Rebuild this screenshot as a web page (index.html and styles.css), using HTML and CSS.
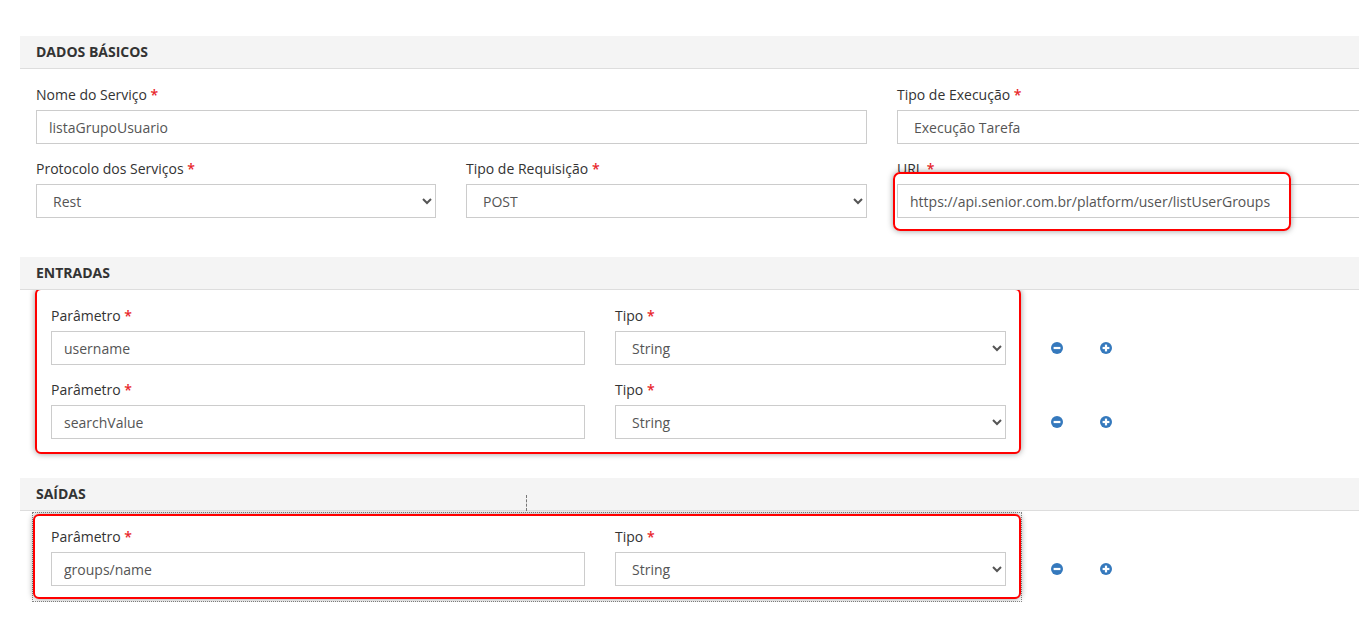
FILE: index.html
```html
<!DOCTYPE html>
<html lang="pt-BR">
<head>
<meta charset="utf-8">
<title>Serviço</title>
<link rel="stylesheet" href="styles.css">
</head>
<body>
<div class="page">
  <section class="section">
    <h2 class="section-head">DADOS BÁSICOS</h2>
    <div class="basic-grid">
      <div class="field span2">
        <label class="lbl">Nome do Serviço <span class="req">*</span></label>
        <input class="ctl" type="text" value="listaGrupoUsuario">
      </div>
      <div class="field wide">
        <label class="lbl">Tipo de Execução <span class="req">*</span></label>
        <select class="ctl sel"><option>Execução Tarefa</option></select>
      </div>
      <div class="field">
        <label class="lbl">Protocolo dos Serviços <span class="req">*</span></label>
        <select class="ctl sel"><option>Rest</option></select>
      </div>
      <div class="field">
        <label class="lbl">Tipo de Requisição <span class="req">*</span></label>
        <select class="ctl sel"><option>POST</option></select>
      </div>
      <div class="field wide url-field">
        <label class="lbl">URL <span class="req">*</span></label>
        <input class="ctl" type="text" value="https://api.senior.com.br/platform/user/listUserGroups">
        <span class="url-mark"></span>
      </div>
    </div>
  </section>

  <section class="section">
    <h2 class="section-head">ENTRADAS</h2>
    <div class="params-wrap entradas">
      <div class="params">
        <div class="param-row">
          <div class="field">
            <label class="lbl">Parâmetro <span class="req">*</span></label>
            <input class="ctl" type="text" value="username">
          </div>
          <div class="field">
            <label class="lbl">Tipo <span class="req">*</span></label>
            <select class="ctl sel"><option>String</option></select>
          </div>
        </div>
        <div class="param-row">
          <div class="field">
            <label class="lbl">Parâmetro <span class="req">*</span></label>
            <input class="ctl" type="text" value="searchValue">
          </div>
          <div class="field">
            <label class="lbl">Tipo <span class="req">*</span></label>
            <select class="ctl sel"><option>String</option></select>
          </div>
        </div>
      </div>
      <div class="icon-col">
        <div class="icon-row">
          <svg class="ico" viewBox="0 0 12 12"><circle cx="6" cy="6" r="6"/><rect x="2.6" y="4.9" width="6.8" height="2.2" fill="#fff"/></svg>
          <svg class="ico" viewBox="0 0 12 12"><circle cx="6" cy="6" r="6"/><rect x="2.6" y="4.9" width="6.8" height="2.2" fill="#fff"/><rect x="4.9" y="2.6" width="2.2" height="6.8" fill="#fff"/></svg>
        </div>
        <div class="icon-row">
          <svg class="ico" viewBox="0 0 12 12"><circle cx="6" cy="6" r="6"/><rect x="2.6" y="4.9" width="6.8" height="2.2" fill="#fff"/></svg>
          <svg class="ico" viewBox="0 0 12 12"><circle cx="6" cy="6" r="6"/><rect x="2.6" y="4.9" width="6.8" height="2.2" fill="#fff"/><rect x="4.9" y="2.6" width="2.2" height="6.8" fill="#fff"/></svg>
        </div>
      </div>
    </div>
  </section>

  <section class="section">
    <h2 class="section-head saidas-head">SAÍDAS<span class="drag-line"></span></h2>
    <div class="params-wrap saidas">
      <div class="dotted">
        <div class="params params-out">
          <div class="param-row">
            <div class="field">
              <label class="lbl">Parâmetro <span class="req">*</span></label>
              <input class="ctl" type="text" value="groups/name">
            </div>
            <div class="field">
              <label class="lbl">Tipo <span class="req">*</span></label>
              <select class="ctl sel"><option>String</option></select>
            </div>
          </div>
        </div>
      </div>
      <div class="icon-col icon-col-out">
        <div class="icon-row">
          <svg class="ico" viewBox="0 0 12 12"><circle cx="6" cy="6" r="6"/><rect x="2.6" y="4.9" width="6.8" height="2.2" fill="#fff"/></svg>
          <svg class="ico" viewBox="0 0 12 12"><circle cx="6" cy="6" r="6"/><rect x="2.6" y="4.9" width="6.8" height="2.2" fill="#fff"/><rect x="4.9" y="2.6" width="2.2" height="6.8" fill="#fff"/></svg>
        </div>
      </div>
    </div>
  </section>
</div>
</body>
</html>
```
FILE: styles.css
```css
html, body {
  margin: 0;
  padding: 0;
  overflow: hidden;
  background: #fff;
}
body {
  font-family: "Open Sans", "Noto Sans", sans-serif;
  font-size: 14px;
  color: #333;
}
.page {
  padding: 36px 0 0 20px;
  overflow: hidden;
}
.section-head {
  margin: 0;
  height: 32px;
  line-height: 32px;
  background: #f4f4f4;
  border-bottom: 1px solid #ddd;
  padding-left: 16px;
  font-size: 14px;
  font-weight: 700;
  color: #333;
  position: relative;
}
.basic-grid {
  display: grid;
  grid-template-columns: 400px 401px 1fr;
  column-gap: 30px;
  row-gap: 15px;
  padding: 16px 0 0 16px;
  margin-bottom: 39px;
}
.span2 { grid-column: span 2; }
.field {
  display: flex;
  flex-direction: column;
  position: relative;
  min-width: 0;
}
.wide .ctl {
  width: calc(100% + 140px);
}
.lbl {
  line-height: 20px;
  margin-bottom: 5px;
  color: #333;
}
.req { color: #e8262b; font-weight: 600; }
.ctl {
  box-sizing: border-box;
  height: 34px;
  border: 1px solid #ccc;
  border-radius: 0;
  padding: 0 12px;
  font-family: "Open Sans", "Noto Sans", sans-serif;
  font-size: 14px;
  color: #555;
  background: #fff;
  outline: none;
  width: 100%;
}
.sel { padding-left: 12px; }
.url-mark {
  position: absolute;
  left: -4px;
  top: 13px;
  width: 398px;
  height: 59px;
  box-sizing: border-box;
  border: 2px solid #f00;
  border-radius: 7px;
  box-shadow: 0 0 6px rgba(0,0,0,0.4);
  pointer-events: none;
}
.params-wrap {
  display: flex;
  align-items: flex-start;
}
.entradas {
  margin: -2px 0 0 15px;
}
.params {
  box-sizing: border-box;
  width: 986px;
  border: 2px solid #f00;
  border-radius: 6px;
  box-shadow: 0 0 6px rgba(0,0,0,0.4);
  padding: 16px 12px 13px 14px;
  display: flex;
  flex-direction: column;
  gap: 15px;
  background: #fff;
}
.param-row {
  display: grid;
  grid-template-columns: 534px 391px;
  column-gap: 30px;
}
.icon-col {
  padding-top: 43px;
  margin-left: 30px;
  display: flex;
  flex-direction: column;
  gap: 40px;
}
.icon-row {
  height: 34px;
  display: flex;
  align-items: center;
  gap: 37px;
}
.ico {
  width: 12px;
  height: 12px;
  fill: #3579bd;
}
.saidas-head { margin-top: 24px; }
.drag-line {
  position: absolute;
  left: 506px;
  top: 17px;
  height: 16px;
  border-left: 1px dashed #777;
}
.saidas {
  margin-left: 12px;
  margin-top: 1px;
}
.dotted {
  border: 1px dotted #888;
  padding: 1px 0 2px 0;
}
.params-out {
  width: 988px;
  padding: 11px 12px 11px 16px;
}
.icon-col-out {
  padding-top: 40px;
  margin-left: 29px;
}
```
